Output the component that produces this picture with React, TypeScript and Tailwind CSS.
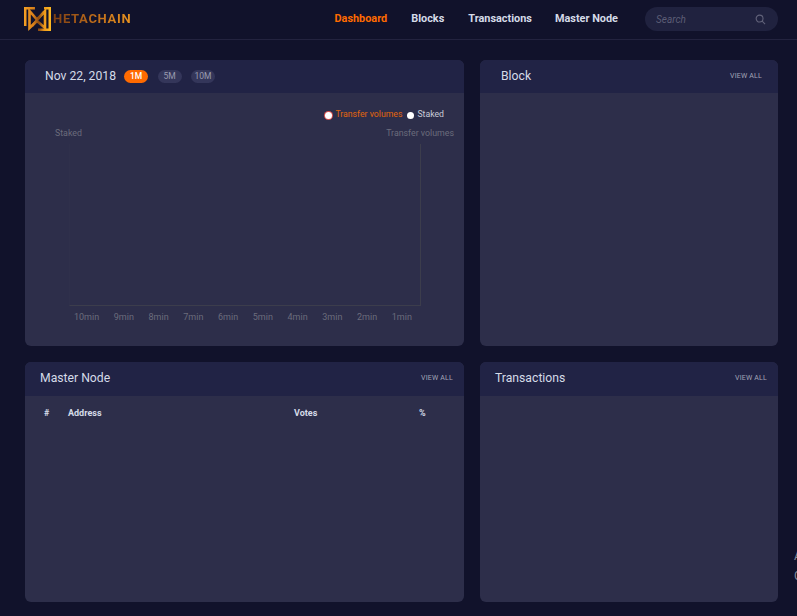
const navItems = ['Blocks', 'Transactions', 'Master Node'];
const minutes = ['10min', '9min', '8min', '7min', '6min', '5min', '4min', '3min', '2min', '1min'];

function Logo() {
  return (
    <svg width="27" height="24" viewBox="0 0 27 24" fill="none" className="shrink-0">
      <defs>
        <linearGradient id="logoGrad" gradientUnits="userSpaceOnUse" x1="0" y1="0" x2="27" y2="0">
          <stop offset="0" stopColor="#f5a024" />
          <stop offset="0.35" stopColor="#d9801a" />
          <stop offset="0.55" stopColor="#8a4a12" />
          <stop offset="0.75" stopColor="#ee9a1c" />
          <stop offset="1" stopColor="#ffbb22" />
        </linearGradient>
      </defs>
      <path d="M11 1.25H1.25V19" stroke="url(#logoGrad)" strokeWidth="2.5" />
      <path d="M20 1.25H25.75V22.75H14" stroke="url(#logoGrad)" strokeWidth="2.5" />
      <path d="M5.5 4V21L13 14L21 21V4L13 12.5L5.5 4Z" stroke="url(#logoGrad)" strokeWidth="2.6" />
      <path d="M8 19L20 5" stroke="url(#logoGrad)" strokeWidth="2.6" />
    </svg>
  );
}

function Header() {
  return (
    <header className="flex items-center h-10 border-b border-[#23233f] pl-6 pr-[19px]">
      <div className="flex items-center gap-[2px] -mt-[2px]">
        <Logo />
        <span className="text-[13px] font-bold tracking-[0.7px] bg-gradient-to-r from-[#7d3f13] via-[#bb6a1a] to-[#e8921f] bg-clip-text text-transparent">
          HETACHAIN
        </span>
      </div>
      <nav className="flex items-center ml-auto gap-[23px] text-[10.9px] font-bold text-[#d5dbe8] -mt-[1px]">
        <a className="text-[#ff6a00] mr-px">Dashboard</a>
        {navItems.map((item) => (
          <a key={item} className={item === 'Blocks' ? 'mr-px' : ''}>
            {item}
          </a>
        ))}
      </nav>
      <div className="flex items-center justify-between w-[133px] h-6 ml-[27px] pl-[11px] pr-3 rounded-full bg-[#20223f] -mt-[1px]">
        <span className="text-[10px] italic text-[#5c5d75]">Search</span>
        <svg width="11" height="11" viewBox="0 0 24 24" fill="none" stroke="#62637a" strokeWidth="2.4">
          <circle cx="10" cy="10" r="7.5" />
          <path d="M15.5 15.5L22 22" />
        </svg>
      </div>
    </header>
  );
}

function Card({ title, headerClass, children }: { title: React.ReactNode; headerClass: string; children?: React.ReactNode }) {
  return (
    <section className="flex flex-col rounded-md overflow-hidden bg-[#2d2e4a]">
      <div className={`flex items-center shrink-0 bg-[#212345] ${headerClass}`}>{title}</div>
      {children}
    </section>
  );
}

function CardTitle({ text, indent, viewRight }: { text: string; indent: string; viewRight: string }) {
  return (
    <>
      <h2 className={`text-[12.2px] text-[#d5dbe8] ${indent}`}>{text}</h2>
      <a className={`ml-auto text-[7px] tracking-[0.2px] text-[#a3a6b8] ${viewRight}`}>VIEW ALL</a>
    </>
  );
}

function RangePill({ label, active }: { label: string; active?: boolean }) {
  return (
    <span
      className={`flex items-center justify-center w-6 h-[13px] rounded-full text-[8.5px] ${
        active ? 'bg-[#ff6a00] text-white font-medium' : 'bg-[#34365a] text-[#9a9cb0]'
      }`}
    >
      {label}
    </span>
  );
}

function Chart() {
  return (
    <div className="flex flex-col flex-1">
      <div className="flex justify-end items-center gap-[5px] h-[12px] mt-4 pr-5 text-[8.7px]">
        <span className="flex items-center gap-[3px] text-[#e3660c]">
          <i className="w-[7px] h-[7px] rounded-full bg-white ring-1 ring-[#d9534f]" />
          Transfer volumes
        </span>
        <span className="flex items-center gap-[3px] text-[#c9cbd8]">
          <i className="w-[7px] h-[7px] rounded-full bg-white" />
          Staked
        </span>
      </div>
      <div className="flex justify-between h-3 mt-[6px] pl-[30px] pr-[10px] text-[8.8px] text-[#6b6c7c]">
        <span>Staked</span>
        <span>Transfer volumes</span>
      </div>
      <div className="flex flex-col ml-[44px] mr-[43px] mt-[5px]">
        <div className="h-[162px] border-l border-r border-b border-l-[#2f304b] border-r-[#3c3d4c] border-b-[#3c3d4c]" />
        <div className="flex justify-between pl-[5px] pr-[9px] mt-[5px] text-[9px] text-[#6b6c7c]">
          {minutes.map((m) => (
            <span key={m}>{m}</span>
          ))}
        </div>
      </div>
    </div>
  );
}

export default function App() {
  return (
    <div className="relative h-[616px] overflow-hidden bg-[#11122b] font-['Roboto',sans-serif]">
      <Header />
      <main className="grid grid-cols-[439px_298px] grid-rows-[286px_240px] gap-4 pl-[25px] mt-5">
        <Card
          headerClass="h-[33px]"
          title={
            <div className="flex items-center pl-5">
              <span className="text-[12.2px] text-[#d5dbe8] mr-2">Nov 22, 2018</span>
              <div className="flex gap-[9.5px]">
                <RangePill label="1M" active />
                <RangePill label="5M" />
                <RangePill label="10M" />
              </div>
            </div>
          }
        >
          <Chart />
        </Card>
        <Card headerClass="h-[33px]" title={<CardTitle text="Block" indent="ml-[21px]" viewRight="mr-4" />} />
        <Card headerClass="h-[34px] pb-[2px]" title={<CardTitle text="Master Node" indent="ml-[15px]" viewRight="mr-[11px]" />}>
          <div className="grid grid-cols-[24px_226px_125px_1fr] pl-[19px] mt-[11px] text-[9px] font-bold text-[#d5dbe8]">
            <span>#</span>
            <span>Address</span>
            <span>Votes</span>
            <span>%</span>
          </div>
        </Card>
        <Card headerClass="h-[34px] pb-[2px]" title={<CardTitle text="Transactions" indent="ml-[15px]" viewRight="mr-[11px]" />} />
      </main>
      <div className="absolute left-[794px] top-[548px] flex flex-col gap-[3px] text-[12px] leading-[17px] text-[#8a8b9c]">
        <span>A</span>
        <span>G</span>
      </div>
    </div>
  );
}
